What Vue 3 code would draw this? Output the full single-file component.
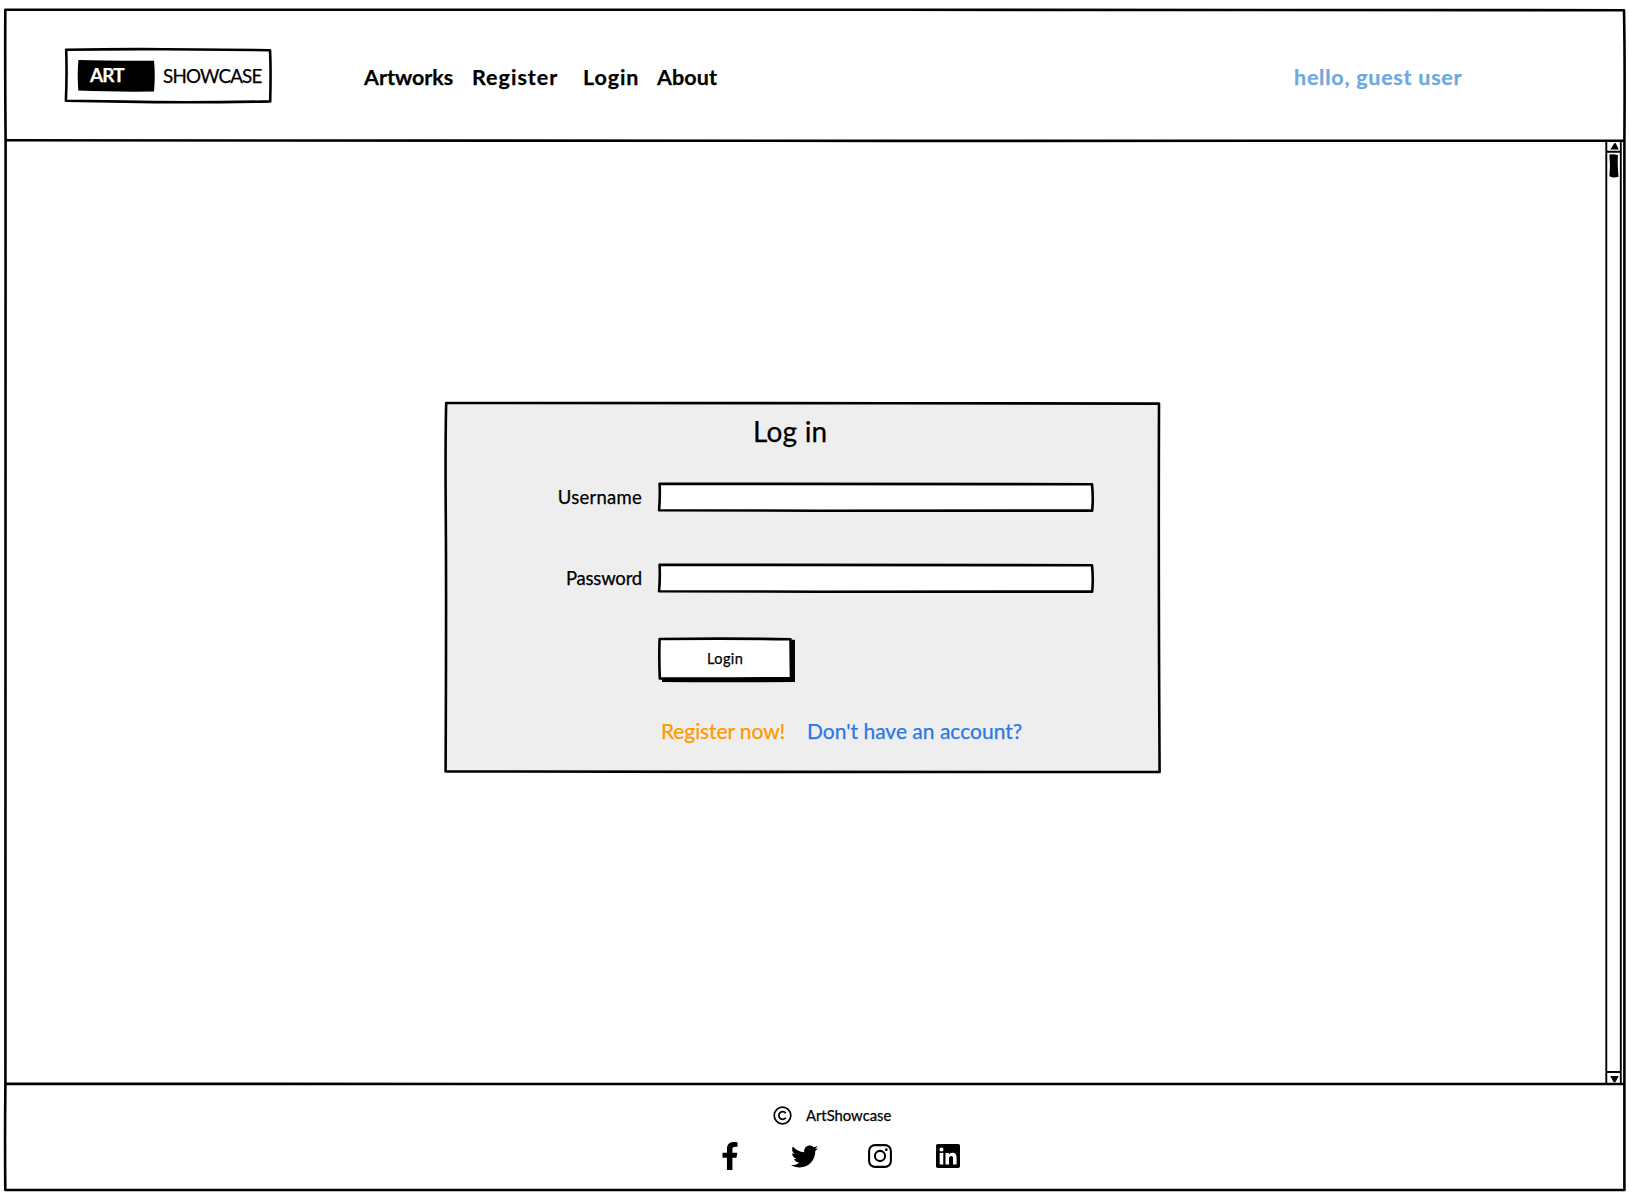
<script setup>
const navItems = [
  { label: 'Artworks', cls: 'artworks' },
  { label: 'Register', cls: 'register' },
  { label: 'Login', cls: 'login' },
  { label: 'About', cls: 'about' },
]
const fields = [
  { id: 'username', label: 'Username', type: 'text' },
  { id: 'password', label: 'Password', type: 'password' },
]
</script>

<template>
  <div class="page">
    <svg class="ink" viewBox="0 0 1629 1195">
      <path d="M5.3 9.8Q400 9.4 900 9.8T1624 10.2Q1625 60 1624.4 140Q1625 600 1624.4 1084L1624.4 1190Q1200 1189.2 800 1190T5.3 1190Q4.8 1140 5.4 1084Q6 600 5.6 141Q5 70 5.3 9.8Z" />
      <path d="M5.5 140.3Q500 141.3 900 140.9T1624 140.7M5.5 1083.9Q600 1083.5 1100 1084T1624 1084" />
    </svg>

    <header class="header">
      <div class="logo">
        <svg class="ink" viewBox="0 0 207 55">
          <path d="M1.2 1.8Q50 .9 100 1.2T205 2.2Q206 20 205.2 53.4Q120 55 60 53.6L.9 52.7Q2 28 1.2 1.8Z" />
        </svg>
        <span class="logo-mark">
          <svg class="ink fill" viewBox="0 0 77 32"><path d="M.5 0Q35 1 76 .7Q77.5 15 76 31.5Q35 32 .3 30.5Q-1 12 .5 0Z" /></svg>
          <b>ART</b>
        </span>
        <span class="logo-text">SHOWCASE</span>
      </div>
      <nav class="nav">
        <a v-for="item in navItems" :key="item.label" :class="item.cls">{{ item.label }}</a>
      </nav>
      <span class="greeting">hello, guest user</span>
    </header>

    <main class="main">
      <form class="card" @submit.prevent>
        <svg class="ink panel" viewBox="0 0 717 373">
          <path d="M2.2 2Q250 1.4 450 2.2T715 2.6Q714.4 180 715.6 371Q500 371.5 300 370.9L1.6 370.4Q2.4 200 1.8 120T2.2 2Z" />
        </svg>
        <h1>Log in</h1>
        <div v-for="field in fields" :key="field.id" class="field">
          <label :for="field.id" :class="field.id">{{ field.label }}</label>
          <div class="box">
            <svg class="ink white" viewBox="0 0 436 30">
              <path d="M1.6 1.8Q200 1.3 434 2.2Q435.4 16 434.2 28.6Q220 29 160 28.7L1.1 28.2Q2.2 15 1.6 1.8Z" />
            </svg>
            <input :id="field.id" :type="field.type" />
          </div>
        </div>
        <button class="submit">
          <svg class="ink white" viewBox="0 0 137 45">
            <path class="shade" d="M4 4L137 2.7L137 45Q60 45.500 4 45Z" />
            <path d="M1.600 2Q70 1.200 132.500 2.200L133 41Q60 42 1.800 41.400Q.9 20 1.600 2Z" />
          </svg>
          <span>Login</span>
        </button>
        <div class="links">
          <a class="signup">Register now!</a>
          <a class="question">Don't have an account?</a>
        </div>
      </form>

      <div class="scrollbar">
        <svg viewBox="0 0 17 943">
          <path class="line" d="M1.3 0V943M15.800 0Q15.400 400 15.800 943M1 10.800H16M1 931H16" />
          <path d="M9.3 2.3Q10.5 1.2 11.2 3L13.7 8.5H5.3ZM5.2 935H13.8L10.4 941.3H8.7Z" />
          <path d="M4.4 13.500Q9 12.500 13 14.200Q12.300 23 13.500 35.700Q9 37.500 4.400 35.200Q5.500 25 4.400 13.500Z" />
        </svg>
      </div>
    </main>

    <footer class="footer">
      <div class="copyright">
        <svg width="19" height="19" viewBox="0 0 19 19" fill="none" stroke="#000">
          <circle cx="9.5" cy="9.5" r="8.3" stroke-width="1.7" />
          <path d="M12.7 7.2A3.8 3.8 0 1 0 12.7 11.8" stroke-width="1.8" />
        </svg>
        <span>ArtShowcase</span>
      </div>
      <div class="social">
        <svg class="facebook" viewBox="0 0 320 512"><path d="M279.14 288l14.22-92.66h-88.91v-60.13c0-25.35 12.42-50.06 52.24-50.06h40.42V6.26S260.43 0 225.36 0c-73.22 0-121.08 44.38-121.08 124.72v70.62H22.89V288h81.39v224h100.17V288z" /></svg>
        <svg class="twitter" viewBox="0 0 512 512"><path d="M459.37 151.716c.325 4.548.325 9.097.325 13.645 0 138.72-105.583 298.558-298.558 298.558-59.452 0-114.68-17.219-161.137-47.106 8.447.974 16.568 1.299 25.34 1.299 49.055 0 94.213-16.568 130.274-44.832-46.132-.975-84.792-31.188-98.112-72.772 6.498.974 12.995 1.624 19.818 1.624 9.421 0 18.843-1.3 27.614-3.573-48.081-9.747-84.143-51.98-84.143-102.985v-1.299c13.969 7.797 30.214 12.67 47.431 13.319-28.264-18.843-46.781-51.005-46.781-87.391 0-19.492 5.197-37.36 14.294-52.954 51.655 63.675 129.3 105.258 216.365 109.807-1.624-7.797-2.599-15.918-2.599-24.04 0-57.828 46.782-104.934 104.934-104.934 30.213 0 57.502 12.67 76.67 33.137 23.715-4.548 46.456-13.32 66.599-25.34-7.798 24.366-24.366 44.833-46.132 57.827 21.117-2.273 41.584-8.122 60.426-16.243-14.292 20.791-32.161 39.308-52.628 54.253z" /></svg>
        <svg class="instagram" viewBox="0 0 24 24" fill="none" stroke="#000">
          <rect x="1.1" y="1.1" width="21.8" height="21.8" rx="6" stroke-width="2.1" />
          <circle cx="12" cy="12" r="5.1" stroke-width="2.1" />
          <circle cx="18.3" cy="5.7" r="1.4" fill="#000" stroke="none" />
        </svg>
        <svg class="linkedin" viewBox="0 0 448 448"><path fill-rule="evenodd" d="M416 0H31.9C14.3 0 0 14.5 0 32.3v383.4C0 433.5 14.3 448 31.9 448H416c17.6 0 32-14.5 32-32.3V32.3C448 14.5 433.6 0 416 0zM135.4 384H69V170.2h66.5V384zM102.2 141a38.5 38.5 0 1 1 0-77 38.5 38.5 0 0 1 0 77zM384.3 384h-66.4V280c0-24.8-.5-56.7-34.5-56.7-34.6 0-39.9 27-39.9 54.9V384h-66.4V170.2h63.7v29.2h.9c8.9-16.8 30.6-34.5 62.9-34.5 67.2 0 79.7 44.3 79.7 101.9z" /></svg>
      </div>
    </footer>
  </div>
</template>

<style>
body {
  background: #fff;
}
</style>

<style scoped>
.page {
  position: relative;
  width: 1629px;
  height: 1195px;
  display: flex;
  flex-direction: column;
  overflow: hidden;
  color: #000;
  font-family: Lato, "Open Sans", sans-serif;
  -webkit-text-stroke: 0.25px currentColor;
  white-space: nowrap;
  box-sizing: border-box;
}
.ink {
  position: absolute;
  inset: 0;
  width: 100%;
  height: 100%;
  fill: none;
  stroke: #000;
  stroke-width: 2.6;
  stroke-linejoin: round;
  overflow: visible;
  pointer-events: none;
}
.ink.fill {
  fill: #000;
  stroke-width: 0;
}
.ink.panel {
  fill: #eee;
}
.ink.white {
  fill: #fff;
}
.ink.white .shade {
  fill: #000;
  stroke-width: 0;
}
.header {
  height: 141px;
  display: flex;
  align-items: flex-start;
  box-sizing: border-box;
  padding: 48px 0 0 65px;
}
.logo {
  position: relative;
  width: 207px;
  height: 55px;
  display: flex;
  box-sizing: border-box;
  padding: 12px 0 0 13px;
}
.logo-mark {
  position: relative;
  width: 77px;
  height: 32px;
}
.logo-mark b {
  position: relative;
  display: block;
  padding-left: 12px;
  color: #fff;
  font-size: 19px;
  letter-spacing: -0.9px;
  line-height: 29px;
}
.logo-text {
  margin-left: 8px;
  font-size: 18.8px;
  letter-spacing: -0.8px;
  line-height: 31px;
}
.nav {
  display: flex;
  margin-left: 92px;
  padding-top: 16px;
  font-size: 21.5px;
  font-weight: 700;
  line-height: 26px;
}
.artworks { width: 108px; }
.register { width: 111px; letter-spacing: 1px; }
.login { width: 74px; letter-spacing: 0.9px; }
.about { width: 60px; letter-spacing: 0.1px; }
.greeting {
  margin-left: 577px;
  padding-top: 16px;
  color: #6fa8dc;
  font-size: 21.5px;
  font-weight: 700;
  letter-spacing: 0.75px;
  line-height: 26px;
}
.main {
  height: 943px;
  display: flex;
  justify-content: space-between;
}
.card {
  position: relative;
  width: 717px;
  height: 373px;
  margin: 260px 0 0 444px;
  display: flex;
  flex-direction: column;
}
h1 {
  position: relative;
  margin: 13px 0 34px;
  padding-left: 309px;
  font-size: 28px;
  font-weight: 400;
  letter-spacing: 0.2px;
  line-height: 34px;
}
.field {
  position: relative;
  display: flex;
  height: 30px;
  margin-bottom: 51px;
}
label {
  width: 198px;
  margin-right: 16px;
  text-align: right;
  font-size: 18.5px;
  line-height: 30px;
}
.username { letter-spacing: 0.25px; }
.password { letter-spacing: -0.2px; }
.box {
  position: relative;
  width: 436px;
  height: 30px;
}
.box input {
  position: relative;
  width: 100%;
  height: 100%;
  box-sizing: border-box;
  border: 0;
  padding: 4px 8px;
  background: transparent;
  outline: 0;
}
.submit {
  position: relative;
  width: 137px;
  height: 45px;
  margin: -7px 0 0 214px;
  border: 0;
  padding: 0 0 2px 49px;
  background: none;
  color: #000;
  font: 14.5px Lato, sans-serif;
  letter-spacing: 0.4px;
  text-align: left;
}
.submit span {
  position: relative;
}
.links {
  position: relative;
  display: flex;
  margin: 36px 0 0 217px;
  font-size: 21px;
  line-height: 26px;
}
.signup {
  width: 146px;
  color: #ff9900;
  letter-spacing: -0.1px;
}
.question {
  color: #2b78e4;
}
.scrollbar {
  width: 17px;
  margin-right: 7px;
}
.scrollbar svg {
  display: block;
  width: 17px;
  height: 943px;
}
.scrollbar .line {
  fill: none;
  stroke: #000;
  stroke-width: 1.9;
}
.footer {
  height: 111px;
  display: flex;
  flex-direction: column;
}
.copyright {
  display: flex;
  gap: 14px;
  margin: 22px 0 0 773px;
  height: 19px;
  font-size: 14.8px;
  line-height: 18px;
}
.copyright svg {
  flex: none;
}
.social {
  display: flex;
  align-items: center;
  height: 28px;
  margin: 17px 0 0 721px;
}
.facebook { width: 18px; height: 28px; }
.twitter { width: 27px; height: 27px; margin-left: 52px; }
.instagram { width: 24px; height: 24px; margin-left: 50px; }
.linkedin { width: 24px; height: 24px; margin-left: 44px; }
</style>
